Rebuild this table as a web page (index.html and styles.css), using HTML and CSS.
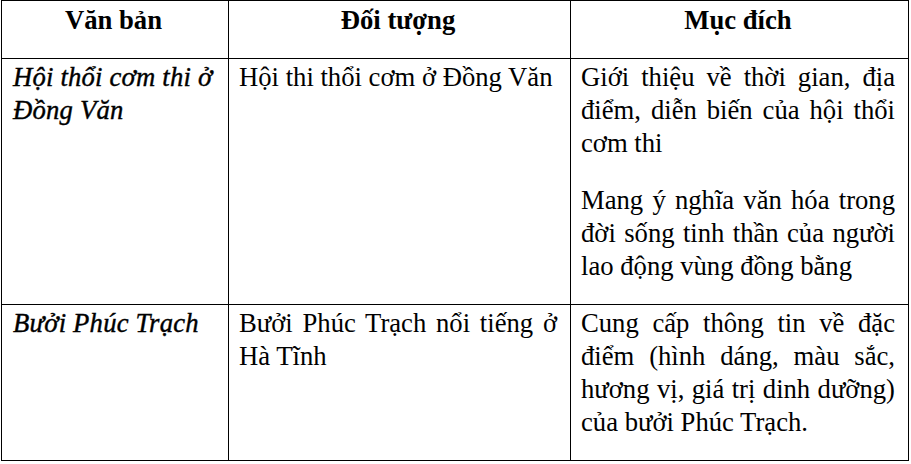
FILE: index.html
```html
<!DOCTYPE html>
<html lang="vi">
<head>
<meta charset="utf-8">
<link rel="stylesheet" href="styles.css">
</head>
<body>
<table class="tbl">
  <colgroup>
    <col class="c1">
    <col class="c2">
    <col class="c3">
  </colgroup>
  <thead>
    <tr>
      <th>Văn bản</th>
      <th>Đối tượng</th>
      <th>Mục đích</th>
    </tr>
  </thead>
  <tbody>
    <tr class="r1">
      <td class="title">Hội thổi cơm thi ở Đồng Văn</td>
      <td class="obj">Hội thi thổi cơm ở Đồng Văn</td>
      <td class="aim">
        <p>Giới thiệu về thời gian, địa điểm, diễn biến của hội thổi cơm thi</p>
        <p>Mang ý nghĩa văn hóa trong đời sống tinh thần của người lao động vùng đồng bằng</p>
      </td>
    </tr>
    <tr class="r2">
      <td class="title">Bưởi Phúc Trạch</td>
      <td class="obj">Bưởi Phúc Trạch nổi tiếng ở Hà Tĩnh</td>
      <td class="aim">
        <p>Cung cấp thông tin về đặc điểm (hình dáng, màu sắc, hương vị, giá trị dinh dưỡng) của bưởi Phúc Trạch.</p>
      </td>
    </tr>
  </tbody>
</table>
</body>
</html>
```

FILE: styles.css
```css
html, body {
  margin: 0;
  padding: 0;
  background: #ffffff;
}

body {
  padding: 0 0 0 1px;
  font-family: "Liberation Serif", "Times New Roman", serif;
  font-size: 26.67px;
  line-height: 33px;
  color: #000000;
}

.tbl {
  border-collapse: collapse;
  table-layout: fixed;
  width: 907px;
}

.c1 { width: 227px; }
.c2 { width: 342px; }
.c3 { width: 338px; }

.tbl th,
.tbl td {
  border: 1.5px solid #000000;
  vertical-align: top;
  padding: 2px 13px 21px 10px;
}

.tbl th {
  font-weight: bold;
  text-align: center;
  padding-top: 3px;
}

.tbl td.title {
  font-style: italic;
  font-weight: normal;
  -webkit-text-stroke: 0.4px #000000;
  letter-spacing: 0.2px;
  padding-left: 11px;
  padding-right: 6px;
}

.tbl td.obj,
.tbl td.aim {
  text-align: justify;
}

.aim p {
  margin: 0 0 24px 0;
}

.aim p:last-child {
  margin-bottom: 0;
}
```
